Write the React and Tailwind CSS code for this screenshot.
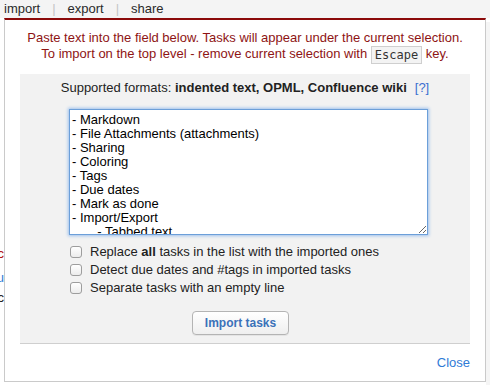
import { useState } from "react";

const tabs = ["import", "export", "share"];

const options = [
  { id: "replace", label: (<>Replace <b>all</b> tasks in the list with the imported ones</>) },
  { id: "dates", label: "Detect due dates and #tags in imported tasks" },
  { id: "separate", label: "Separate tasks with an empty line" },
];

const sample = [
  "- Markdown",
  "- File Attachments (attachments)",
  "- Sharing",
  "- Coloring",
  "- Tags",
  "- Due dates",
  "- Mark as done",
  "- Import/Export",
  "       - Tabbed text",
  "       - OPML",
  "       - Confluence wiki",
].join("\n");

function Checkbox({ checked, onClick }) {
  return (
    <span
      onClick={onClick}
      className={`w-[12px] h-[12px] rounded-[3px] border border-[#9d9d9d] shrink-0 bg-gradient-to-b from-white to-[#ececec] ${
        checked ? "bg-[#4a8ad8]" : ""
      }`}
    />
  );
}

export default function App() {
  const [checked, setChecked] = useState({});
  const toggle = (id) => setChecked({ ...checked, [id]: !checked[id] });

  return (
    <div className="w-[490px] h-[385px] bg-white flex flex-col overflow-hidden font-['Liberation_Sans',Arial,sans-serif] text-[13px]">
      {/* top tabs */}
      <div className="h-[18px] bg-[#f4f4f4] flex items-center pl-[4px] leading-[18px] text-[#2a2a2a]">
        {tabs.map((t, i) => (
          <div key={t} className="flex items-center">
            {i > 0 && <span className="text-[#c4c4c4] px-[12px]">|</span>}
            <span>{t}</span>
          </div>
        ))}
      </div>

      <div className="flex flex-1">
        {/* page behind the dialog */}
        <div className="w-[4px] overflow-hidden flex flex-col items-end pt-[226px] leading-[20px] whitespace-nowrap">
          <span className="text-[#b01010]">Sync</span>
          <span className="text-[#2f7bd6] mt-[4px]">Menu</span>
          <span className="text-[#222]">Doc</span>
        </div>

        {/* dialog */}
        <div className="w-[482px] h-[364px] border-t-2 border-t-[#8b0a0a] border-x border-b border-[#cacaca] bg-white flex flex-col">
          <div className="pt-[10px] text-center leading-[16px] text-[#8e1414]">
            <div>Paste text into the field below. Tasks will appear under the current selection.</div>
            <div>
              To import on the top level - remove current selection with{" "}
              <span className="inline-block h-[18px] leading-[16px] px-[3px] border border-[#cfcfcf] bg-[#f3f3f3] text-[#333] font-['DejaVu_Sans_Mono',monospace] text-[12px] align-middle">
                Escape
              </span>{" "}
              key.
            </div>
          </div>

          <div className="mt-[10px] mx-[15px] bg-[#f2f2f2] border-b border-[#cfcfcf] pt-[6px] pb-[8px] flex flex-col">
            <div className="text-center leading-[16px] text-[#222]">
              Supported formats: <b>indented text, OPML, Confluence wiki</b>
              <span className="ml-[8px] text-[#3b6fd0]">[?]</span>
            </div>

            <textarea
              defaultValue={sample}
              spellCheck={false}
              className="mt-[13px] ml-[49px] w-[359px] h-[126px] border border-[#6c9fd9] shadow-[0_0_3px_1px_#9dc1ec] bg-white pt-[3px] pl-[2px] leading-[14px] text-[13px] text-black overflow-hidden outline-none font-['Liberation_Sans',Arial,sans-serif]"
            />

            <div className="mt-[8px] flex flex-col">
              {options.map((o) => (
                <label key={o.id} className="h-[18px] flex items-center pl-[50px] gap-[8px] text-[#222]">
                  <Checkbox checked={checked[o.id]} onClick={() => toggle(o.id)} />
                  <span>{o.label}</span>
                </label>
              ))}
            </div>

            <button className="mt-[14px] ml-[172px] w-[97px] h-[24px] rounded-[4px] border border-[#b4b4b4] bg-gradient-to-b from-white to-[#efefef] text-[12px] font-bold text-[#3b72b9] shadow-[0_1px_0_#e4e4e4]">
              Import tasks
            </button>
          </div>

          <div className="mt-[11px] pr-[15px] text-right leading-[16px]">
            <span className="text-[#2f7bd6]">Close</span>
          </div>
        </div>

        <div className="flex-1 bg-[#f5f5f5] mt-[4px]" />
      </div>
    </div>
  );
}
